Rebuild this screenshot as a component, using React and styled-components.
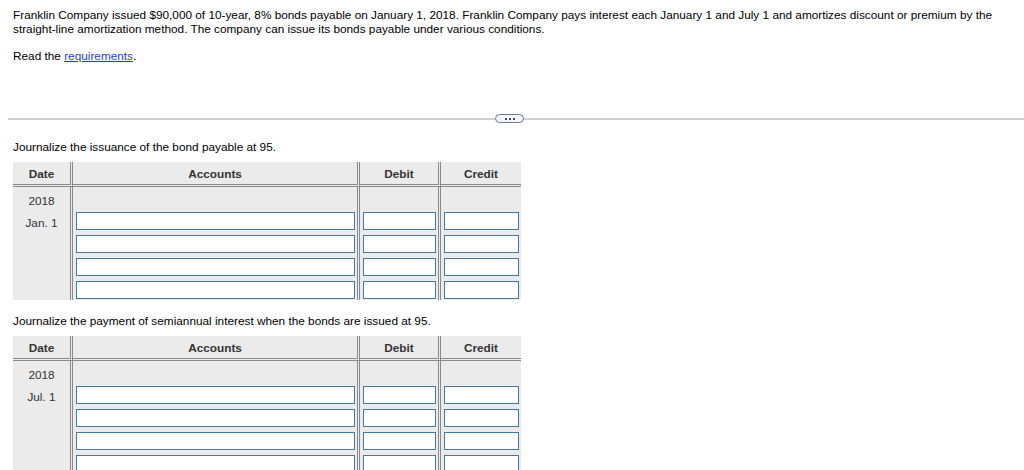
import React from "react";
import styled, { createGlobalStyle } from "styled-components";

const GlobalStyle = createGlobalStyle`
  body {
    margin: 0;
    background: #fff;
    font-family: "Liberation Sans", Arial, sans-serif;
    font-size: 11.8px;
    color: #000;
  }
`;

const Page = styled.div`
  padding: 8px 0 0 13px;
`;

const Paragraph = styled.p`
  margin: 0 13px 0 0;
  line-height: 14px;
`;

const Spacer = styled.div`
  height: ${(p) => p.$h}px;
`;

const Link = styled.a`
  color: #1f3fd1;
  text-decoration: underline;
`;

const DividerRow = styled.div`
  position: relative;
  height: 2px;
  margin: 0 0 0 -5px;
  background: #cfcfd3;
`;

const MoreButton = styled.button`
  position: absolute;
  left: 487px;
  top: -4px;
  width: 29px;
  height: 9px;
  padding: 0;
  border: 1px solid #6b7a8e;
  border-radius: 5px;
  background: #f4f6f9;
  display: flex;
  align-items: center;
  justify-content: center;
  gap: 2px;
`;

const Dot = styled.span`
  width: 2px;
  height: 2px;
  background: #3d4a5c;
`;

const Table = styled.table`
  border-collapse: separate;
  border-spacing: 0;
  background: #ebebeb;
  table-layout: fixed;
  width: 508px;
`;

const HeadCell = styled.th`
  box-sizing: border-box;
  height: 25px;
  padding: 5px 0 0;
  line-height: 14px;
  vertical-align: top;
  font-weight: bold;
  color: #333;
  text-align: center;
  border-bottom: 3px double #8a8a8a;
  border-right: ${(p) => (p.$last ? "none" : "3px double #8a8a8a")};
`;

const Cell = styled.td`
  padding: ${(p) => (p.$input ? "4px 2px 1px 3px" : "0")};
  height: ${(p) => (p.$input ? "18px" : "21px")};
  vertical-align: top;
  border-right: ${(p) => (p.$last ? "none" : "3px double #8a8a8a")};
`;

const DateText = styled.div`
  text-align: center;
  color: #333;
  line-height: 14px;
  padding-top: ${(p) => (p.$first ? "7px" : "8px")};
`;

const Input = styled.input`
  display: block;
  box-sizing: border-box;
  width: 100%;
  height: 18px;
  margin: 0;
  border: 1px solid #3f7ba6;
  background: #fff;
`;

const JournalTable = ({ date }) => (
  <Table>
    <colgroup>
      <col style={{ width: 60 }} />
      <col style={{ width: 287 }} />
      <col style={{ width: 81 }} />
      <col style={{ width: 80 }} />
    </colgroup>
    <thead>
      <tr>
        <HeadCell>Date</HeadCell>
        <HeadCell>Accounts</HeadCell>
        <HeadCell>Debit</HeadCell>
        <HeadCell $last>Credit</HeadCell>
      </tr>
    </thead>
    <tbody>
      <tr>
        <Cell>
          <DateText $first>2018</DateText>
        </Cell>
        <Cell />
        <Cell />
        <Cell $last />
      </tr>
      {[0, 1, 2, 3].map((i) => (
        <tr key={i}>
          <Cell>{i === 0 && <DateText>{date}</DateText>}</Cell>
          <Cell $input>
            <Input />
          </Cell>
          <Cell $input>
            <Input />
          </Cell>
          <Cell $input $last>
            <Input />
          </Cell>
        </tr>
      ))}
    </tbody>
  </Table>
);

export default function App() {
  return (
    <>
      <GlobalStyle />
      <Page>
        <Paragraph>
          Franklin Company issued $90,000 of 10-year, 8% bonds payable on January 1, 2018. Franklin
          Company pays interest each January 1 and July 1 and amortizes discount or premium by the
          straight-line amortization method. The company can issue its bonds payable under various
          conditions.
        </Paragraph>
        <Spacer $h={13} />
        <Paragraph>
          Read the <Link href="#">requirements</Link>.
        </Paragraph>
        <Spacer $h={55} />
        <DividerRow>
          <MoreButton>
            <Dot />
            <Dot />
            <Dot />
          </MoreButton>
        </DividerRow>
        <Spacer $h={20} />
        <Paragraph>Journalize the issuance of the bond payable at 95.</Paragraph>
        <Spacer $h={8} />
        <JournalTable date="Jan. 1" />
        <Spacer $h={14} />
        <Paragraph>Journalize the payment of semiannual interest when the bonds are issued at 95.</Paragraph>
        <Spacer $h={8} />
        <JournalTable date="Jul. 1" />
      </Page>
    </>
  );
}
